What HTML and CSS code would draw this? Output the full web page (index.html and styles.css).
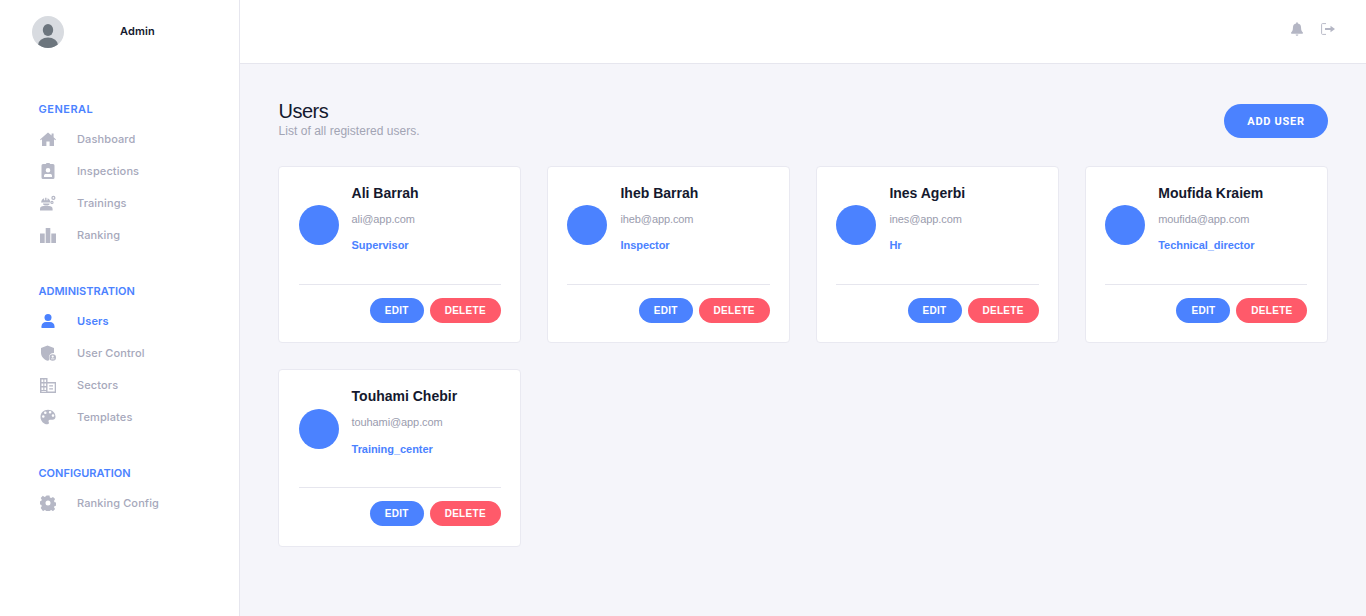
FILE: index.html
```html
<!DOCTYPE html>
<html lang="en">
<head>
<meta charset="utf-8">
<title>Users</title>
<link rel="stylesheet" href="styles.css">
</head>
<body>
<div class="app">
  <aside class="sidebar">
    <div class="profile">
      <svg class="profile-pic" viewBox="0 0 32 32"><defs><clipPath id="pc"><circle cx="16" cy="16" r="16"/></clipPath></defs><circle cx="16" cy="16" r="16" fill="#d8dbe0"/><g clip-path="url(#pc)" fill="#6c757d"><ellipse cx="16" cy="14" rx="5.2" ry="6"/><ellipse cx="16" cy="29" rx="10" ry="7.5"/></g></svg>
      <span class="profile-name">Admin</span>
    </div>
    <nav class="nav">
      <section class="nav-section">
        <h2 class="nav-title nav-title-wide">GENERAL</h2>
        <a class="nav-item"><svg class="nav-icon" viewBox="0 0 16 16"><path d="M8 1.500 0 8.400l.7.8L2 8.200V15h4.400v-4.500h3.200V15H14V8.200l1.300 1 .7-.8-2.400-2.100V2.600h-2v2L8 1.500z"/></svg><span>Dashboard</span></a>
        <a class="nav-item"><svg class="nav-icon" viewBox="0 0 16 16"><path fill-rule="evenodd" d="M3 1H5.800a2.300 1.800 0 0 1 4.400 0H13A1.500 1.500 0 0 1 14.500 2.500v12A1.500 1.500 0 0 1 13 16H3a1.500 1.500 0 0 1-1.500-1.500v-12A1.500 1.500 0 0 1 3 1zM8 5a2.300 2.300 0 1 0 0 4.600A2.300 2.300 0 0 0 8 5zM4 14h8v-1.300c0-1-.8-1.700-1.700-1.700H5.700c-.9 0-1.700.7-1.700 1.700z"/></svg><span>Inspections</span></a>
        <a class="nav-item"><svg class="nav-icon" viewBox="0 0 16 16"><path d="M1.500 6.500c0-1.700 1.200-2.900 2.600-3.300v2h1V2.800h1.400v2.400h1v-2c1.400.4 2.600 1.600 2.600 3.300h.4v.9H1.100v-.9z"/><path d="M3 8.400h6.600a3.300 2.100 0 0 1-6.600 0zM0 15.500v-1.500c0-2 1.700-2.900 3.500-2.900h5.600c1.800 0 3.500.9 3.500 2.900v1.500z"/><path fill-rule="evenodd" d="M13.400.800a2.100 2.100 0 1 0 0 4.200 2.100 2.100 0 0 0 0-4.200zm0 1.300a.8.800 0 1 1 0 1.600.8.800 0 0 1 0-1.600zM12 5.800a1.600 1.600 0 1 0 0 3.200 1.600 1.600 0 0 0 0-3.200zm0 1.100a.5.500 0 1 1 0 1 .5.500 0 0 1 0-1z"/></svg><span>Trainings</span></a>
        <a class="nav-item"><svg class="nav-icon" viewBox="0 0 16 16"><path d="M0 6.500h4.700V16H0zM5.700 1h4.600V16H5.700zM11.300 6.500H16V16h-4.700z"/></svg><span>Ranking</span></a>
      </section>
      <section class="nav-section">
        <h2 class="nav-title">ADMINISTRATION</h2>
        <a class="nav-item is-active"><svg class="nav-icon" viewBox="0 0 16 16"><circle cx="8" cy="4.500" r="3.500"/><path d="M1.500 15v-1.800C1.500 10.800 3.500 9 6 9h4c2.500 0 4.500 1.800 4.500 4.200V15z"/></svg><span>Users</span></a>
        <a class="nav-item"><svg class="nav-icon" viewBox="0 0 16 16"><path d="M7.500 0.500 1 3v4.500c0 3.800 2.600 7 6.500 8.300.7-.2 1.300-.5 1.900-.9A4.600 4.600 0 0 1 14 8V3z"/><path fill-rule="evenodd" d="M12.700 9.200a3.300 3.300 0 1 0 0 6.600 3.300 3.300 0 0 0 0-6.600zm0 1.300a1.100 1.100 0 1 1 0 2.200 1.100 1.100 0 0 1 0-2.200zm-1.700 3.100h3.400v.6h-3.400z"/></svg><span>User Control</span></a>
        <a class="nav-item"><svg class="nav-icon" viewBox="0 0 16 16"><path fill-rule="evenodd" d="M0 1h7.500v4H16V16H0zm1.500 1.500V5h1.800V2.500zm2.900 0V5h1.700V2.500zM1.500 6.500V9h1.800V6.500zm2.900 0V9h1.700V6.500zM1.500 10.500V13h1.800v-2.500zm2.900 0V13h1.700v-2.500zM1.500 14v.700h4.600V14zM7.500 6.500v8h7.200v-8zm1.700 1.700h3.800v1.200H9.200zm0 3h3.800v1.200H9.200z"/></svg><span>Sectors</span></a>
        <a class="nav-item"><svg class="nav-icon" viewBox="0 0 16 16"><path fill-rule="evenodd" d="M8 .8C3.700.8.500 3.900.500 8c0 4 3.200 7.300 6.800 7.300 1.700 0 2-1.300 1.400-2.300-.6-1.100 0-2.300 1.300-2.300h2.600c1.600 0 2.900-1.100 2.900-3C15.500 3.600 12.200.8 8 .8zM3.300 8.800a1.300 1.300 0 1 1 0-2.600 1.300 1.300 0 0 1 0 2.600zm2-3.800a1.300 1.300 0 1 1 0-2.600 1.300 1.300 0 0 1 0 2.600zm4.800-.4a1.300 1.300 0 1 1 0-2.600 1.300 1.300 0 0 1 0 2.600zm2.900 3.300a1.300 1.300 0 1 1 0-2.600 1.300 1.300 0 0 1 0 2.600z"/></svg><span>Templates</span></a>
      </section>
      <section class="nav-section">
        <h2 class="nav-title">CONFIGURATION</h2>
        <a class="nav-item"><svg class="nav-icon" viewBox="0 0 16 16"><path fill-rule="evenodd" d="M6.500.5h3l.4 2 1.300.6 1.800-1.100 2.100 2.100-1.100 1.800.6 1.300 2 .4v3l-2 .4-.6 1.300 1.100 1.800-2.100 2.100-1.800-1.100-1.300.6-.4 2h-3l-.4-2-1.300-.6-1.800 1.100L.7 12.900l1.100-1.800-.6-1.300-2-.4v-3l2-.4.6-1.300L.7 2.900 2.800.8 4.600 1.900l1.300-.6zM8 5.500a2.500 2.500 0 1 0 0 5 2.500 2.500 0 0 0 0-5z"/></svg><span>Ranking Config</span></a>
      </section>
    </nav>
  </aside>
  <div class="main">
    <header class="topbar">
      <svg class="top-icon bell" viewBox="0 0 14 16"><path d="M7 0a1 1 0 0 0-1 1v.7A4.600 4.600 0 0 0 2.300 6.300c0 3.800-1.300 4.900-2.100 5.800-.2.200-.2.400-.2.500 0 .5.300.9.900.9h12.200c.6 0 .9-.4.900-.9 0-.1 0-.3-.2-.5-.8-.9-2.100-2-2.100-5.800A4.600 4.600 0 0 0 8 1.700V1a1 1 0 0 0-1-1zM5.400 14.300a1.600 1.600 0 0 0 3.200 0z"/></svg>
      <svg class="top-icon logout" viewBox="0 0 14 12"><path d="M5 .6H1.400a.8.8 0 0 0-.8.800v9.200c0 .4.400.8.800.8H5" fill="none" stroke="#b9bbc8" stroke-width="1"/><path d="M9.500 2.800v2.300H4v1.800h5.500v2.300L14 6z" fill="#b4b6c4"/></svg>
    </header>
    <main class="content">
      <div class="page-head">
        <div>
          <h1 class="page-title">Users</h1>
          <p class="page-sub">List of all registered users.</p>
        </div>
        <button class="btn-add">ADD USER</button>
      </div>
      <div class="grid">
        <article class="card">
          <div class="card-body">
            <div class="avatar"></div>
            <div class="info"><h3 class="name">Ali Barrah</h3><p class="email">ali@app.com</p><p class="role">Supervisor</p></div>
          </div>
          <div class="actions"><button class="btn btn-edit">EDIT</button><button class="btn btn-delete">DELETE</button></div>
        </article>
        <article class="card">
          <div class="card-body">
            <div class="avatar"></div>
            <div class="info"><h3 class="name">Iheb Barrah</h3><p class="email">iheb@app.com</p><p class="role">Inspector</p></div>
          </div>
          <div class="actions"><button class="btn btn-edit">EDIT</button><button class="btn btn-delete">DELETE</button></div>
        </article>
        <article class="card">
          <div class="card-body">
            <div class="avatar"></div>
            <div class="info"><h3 class="name">Ines Agerbi</h3><p class="email">ines@app.com</p><p class="role">Hr</p></div>
          </div>
          <div class="actions"><button class="btn btn-edit">EDIT</button><button class="btn btn-delete">DELETE</button></div>
        </article>
        <article class="card">
          <div class="card-body">
            <div class="avatar"></div>
            <div class="info"><h3 class="name">Moufida Kraiem</h3><p class="email">moufida@app.com</p><p class="role">Technical_director</p></div>
          </div>
          <div class="actions"><button class="btn btn-edit">EDIT</button><button class="btn btn-delete">DELETE</button></div>
        </article>
        <article class="card">
          <div class="card-body">
            <div class="avatar"></div>
            <div class="info"><h3 class="name">Touhami Chebir</h3><p class="email">touhami@app.com</p><p class="role">Training_center</p></div>
          </div>
          <div class="actions"><button class="btn btn-edit">EDIT</button><button class="btn btn-delete">DELETE</button></div>
        </article>
      </div>
    </main>
  </div>
</div>
</body>
</html>
```
FILE: styles.css
```css
* { box-sizing: border-box; }
html, body { margin: 0; height: 100%; overflow: hidden; }
body { font-family: "Liberation Sans", Arial, sans-serif; background: #f5f5fa; color: #14192e; }
.app { display: flex; height: 616px; }

.sidebar { width: 240px; flex: none; background: #fff; border-right: 1px solid #e6e6ee; font-family: Inter, sans-serif; }
.profile { display: flex; align-items: center; height: 64px; padding: 0 32px; }
.profile-pic { width: 32px; height: 32px; flex: none; }
.profile-name { margin-left: 56px; font-size: 11px; font-weight: 600; letter-spacing: .15px; color: #14192e; position: relative; top: -1px; }
.nav { padding: 37px 0 0 38.5px; display: flex; flex-direction: column; gap: 32px; }
.nav-title { margin: 0 0 6px; font-size: 11px; line-height: 16px; font-weight: 600; color: #4b82ff; }
.nav-title-wide { letter-spacing: .5px; }
.nav-item { display: flex; align-items: center; height: 32px; font-size: 11px; font-weight: 500; letter-spacing: .12px; color: #a6a8bb; }
.nav-icon { width: 16px; height: 16px; flex: none; margin: 0 21px 0 1.5px; fill: #b6b8c6; }
.nav-item.is-active { color: #4b82ff; font-weight: 600; }
.nav-item.is-active .nav-icon { fill: #4b82ff; }

.main { flex: 1; min-width: 0; }
.topbar { height: 64px; background: #fff; border-bottom: 1px solid #e6e6ee; display: flex; align-items: center; justify-content: flex-end; gap: 18px; padding: 0 31px 5px 0; }
.top-icon { flex: none; }
.bell { width: 12px; height: 14px; fill: #b4b6c4; }
.logout { width: 14px; height: 12px; }

.content { padding: 38px 38px 0 38.49px; }
.page-head { display: flex; justify-content: space-between; align-items: center; height: 38px; margin-bottom: 26px; }
.page-title { margin: 0; font-size: 20px; line-height: 18px; font-weight: 400; letter-spacing: -.5px; color: #14192e; }
.page-sub { margin: 2px 0 0; font-size: 12px; line-height: 18px; letter-spacing: .04px; color: #a2a4b4; }
.btn-add { width: 104px; height: 34px; border: 0; border-radius: 17px; background: #4b82ff; color: #fff; font-family: Roboto, sans-serif; font-size: 11px; font-weight: 700; letter-spacing: .7px; }

.grid { display: grid; grid-template-columns: repeat(4, 1fr); column-gap: 26.09px; row-gap: 26.1px; }
.card { background: #fff; border: 1px solid #e9e9f1; border-radius: 4px; padding: 16px 19.55px 19.3px 19.1px; }
.card-body { display: flex; align-items: center; gap: 13px; padding-bottom: 16.6px; border-bottom: 1px solid #e6e6ee; }
.avatar { width: 40px; height: 40px; flex: none; border-radius: 50%; background: #4b82ff; }
.info { min-width: 0; }
.name { margin: 0 0 6px; font-size: 14px; line-height: 20px; font-weight: 700; color: #14192e; }
.email { margin: 0 0 6.2px; font-size: 11px; line-height: 20px; letter-spacing: -.1px; color: #9a9cae; }
.role { margin: 0 0 12.2px; font-size: 11px; line-height: 20px; font-weight: 700; letter-spacing: -.05px; color: #4b82ff; }
.actions { display: flex; justify-content: flex-end; gap: 6px; margin-top: 13px; }
.btn { height: 25px; border: 0; border-radius: 13px; color: #fff; font-family: "Liberation Sans", Arial, sans-serif; font-size: 10px; font-weight: 700; letter-spacing: .3px; padding: 0; }
.btn-edit { width: 54px; background: #4b82ff; }
.btn-delete { width: 71px; background: #ff5a6a; }
```
